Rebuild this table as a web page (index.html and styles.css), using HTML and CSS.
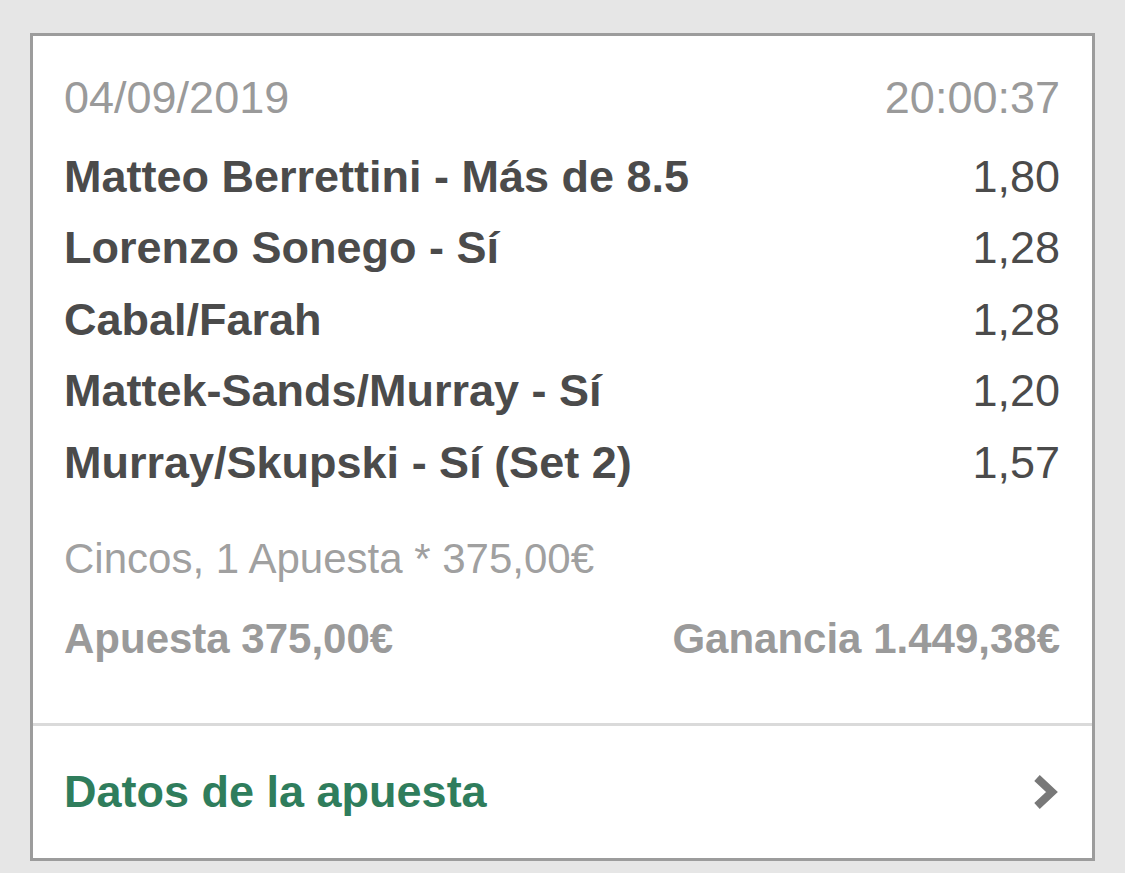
FILE: index.html
```html
<!DOCTYPE html>
<html lang="es">

<head>
    <meta charset="UTF-8">
    <meta name="viewport" content="width=device-width, initial-scale=1.0">
    <title>Apuesta</title>
    <link rel="stylesheet" href="styles.css">
</head>

<body>
    <div class="bet-card">
        <div class="bet-body">
            <div class="bet-header">
                <span>04/09/2019</span>
                <span>20:00:37</span>
            </div>

            <ul class="selections">
                <li><span class="pick">Matteo Berrettini - Más de 8.5</span><span class="odds">1,80</span></li>
                <li><span class="pick">Lorenzo Sonego - Sí</span><span class="odds">1,28</span></li>
                <li><span class="pick">Cabal/Farah</span><span class="odds">1,28</span></li>
                <li><span class="pick">Mattek-Sands/Murray - Sí</span><span class="odds">1,20</span></li>
                <li><span class="pick">Murray/Skupski - Sí (Set 2)</span><span class="odds">1,57</span></li>
            </ul>

            <div class="bet-type">Cincos, 1 Apuesta * 375,00€</div>

            <div class="bet-totals">
                <span>Apuesta 375,00€</span>
                <span>Ganancia 1.449,38€</span>
            </div>
        </div>

        <a class="bet-details" href="#">
            <span>Datos de la apuesta</span>
            <svg class="chevron" width="26" height="36" viewBox="0 0 26 36">
                <polyline points="5,4 20,18 5,32" fill="none" stroke="#787878" stroke-width="8" />
            </svg>
        </a>
    </div>
</body>

</html>
```

FILE: styles.css
```css
body {
    margin: 0;
    background-color: #e6e6e6;
    font-family: 'Liberation Sans', Arial, sans-serif;
}

.bet-card {
    width: 1065px;
    margin: 33px 0 0 30px;
    box-sizing: border-box;
    background-color: #fff;
    border: 3px solid #9c9c9c;
}

.bet-body {
    padding: 31.5px 32px 54.5px 31px;
    border-bottom: 3px solid #dadada;
}

.bet-header {
    display: flex;
    justify-content: space-between;
    font-size: 45px;
    line-height: 60px;
    color: #9a9a9a;
    margin-bottom: 13px;
}

.selections {
    list-style-type: none;
    margin: 0;
    padding: 0;
}

.selections li {
    display: flex;
    justify-content: space-between;
    font-size: 45px;
    line-height: 71.5px;
    color: #4b4b4b;
}

.selections .pick {
    font-weight: bold;
}

.bet-type {
    margin-top: 30.5px;
    font-size: 42px;
    line-height: 60px;
    color: #a0a0a0;
}

.bet-totals {
    display: flex;
    justify-content: space-between;
    margin-top: 20px;
    font-size: 42px;
    line-height: 60px;
    font-weight: bold;
    color: #9a9a9a;
}

.bet-details {
    display: flex;
    justify-content: space-between;
    align-items: center;
    height: 132px;
    padding: 0 34px 0 31px;
    font-size: 45px;
    font-weight: bold;
    color: #2f7d5c;
    text-decoration: none;
}

.chevron {
    display: block;
}
```
